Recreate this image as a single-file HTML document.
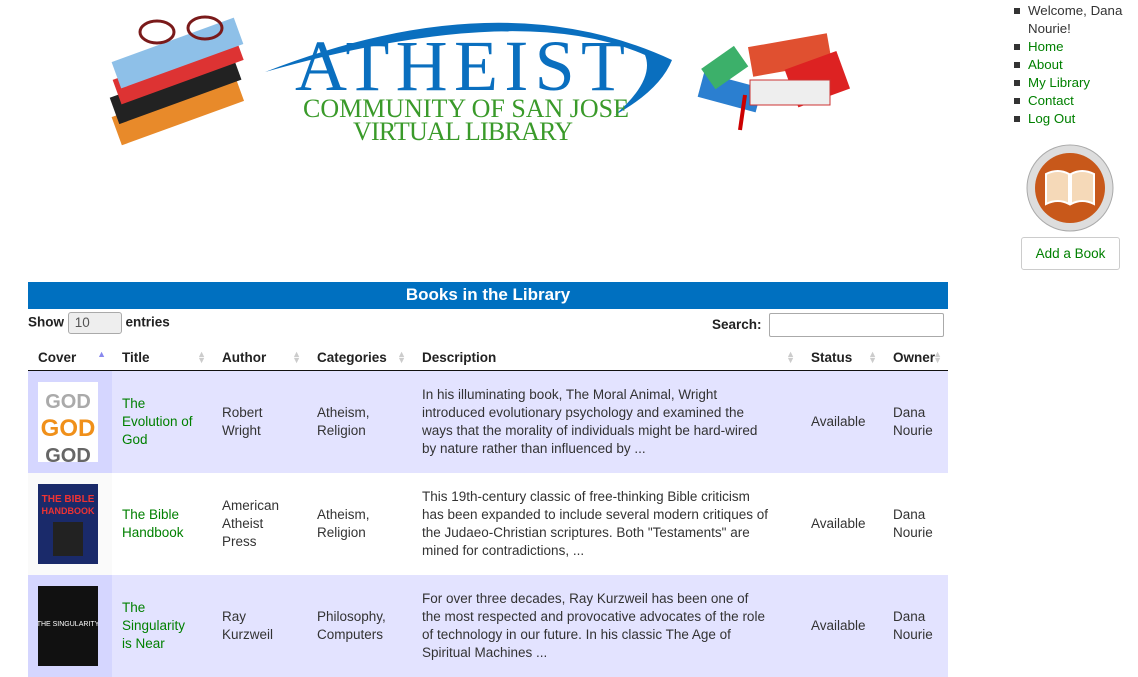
<!DOCTYPE html>
<html><head><meta charset="utf-8"><style>
body,div,td,th,li,span,a{font-family:"Liberation Sans",Arial,Helvetica,sans-serif}
body{margin:0;width:1138px;height:640px;overflow:hidden;background:#fff;font-size:13.5px;color:#333;position:relative}
a{color:#008000;text-decoration:none}
.abs{position:absolute}
.nav{left:1014px;top:2px;margin:0;padding:0;list-style:none;line-height:18px;font-size:13.3px}
.nav li{padding-left:14px;position:relative}
.nav li:before{content:"";position:absolute;left:0;top:6px;width:6px;height:6px;background:#333}
.bar{left:28px;top:282px;width:920px;height:27px;background:#0070c0;color:#fff;font-weight:bold;font-size:17px;text-align:center;line-height:26px}
table{position:absolute;left:28px;top:345px;width:920px;border-collapse:collapse;table-layout:fixed}
th{text-align:left;font-weight:bold;height:25px;padding:0 10px;border-bottom:1px solid #111;position:relative;font-size:13.5px;color:#222}
th .s{position:absolute;right:6px;top:6px;color:#ccc;font-size:9px;line-height:6px}
td{padding:0 10px;height:102px;vertical-align:middle;line-height:18px;white-space:nowrap;overflow:hidden}
tr.o td{background:#e3e3ff}
tr.o td.c{background:#d5d6ff}
td.c{background:#f0f0f0}
tr.e td.c{background:#fafafa}
.cv{width:60px;height:80px;display:block}
</style></head><body>
<svg class="abs" style="left:100px;top:0" width="770" height="150">
<g transform="translate(5,0)">
<rect x="8" y="95" width="130" height="30" fill="#e88a2a" transform="rotate(-20 70 110)"/>
<rect x="6" y="75" width="130" height="28" fill="#222" transform="rotate(-20 70 90)"/>
<rect x="8" y="58" width="130" height="26" fill="#d33" transform="rotate(-20 70 70)"/>
<rect x="8" y="40" width="130" height="28" fill="#8ec0e8" transform="rotate(-20 70 55)"/>
<ellipse cx="52" cy="32" rx="17" ry="11" fill="none" stroke="#7a1a1a" stroke-width="3"/>
<ellipse cx="100" cy="28" rx="17" ry="11" fill="none" stroke="#7a1a1a" stroke-width="3"/>
</g>
<path d="M165 72 Q400 -20 572 60 Q560 90 515 115 Q555 80 545 55 Q420 0 165 72Z" fill="#0a6fbf"/>
<text x="195" y="90" font-family="Liberation Serif,serif" font-size="72" fill="#0a6fbf" textLength="330">ATHEIST</text>
<text x="203" y="117" font-family="Liberation Serif,serif" font-size="26" fill="#3a9a2a" textLength="326">COMMUNITY OF SAN JOSE</text>
<text x="253" y="140" font-family="Liberation Serif,serif" font-size="26" fill="#3a9a2a" textLength="220">VIRTUAL LIBRARY</text>
<g>
<rect x="600" y="80" width="60" height="25" fill="#2b7fd0" transform="rotate(15 630 92)"/>
<rect x="605" y="55" width="40" height="25" fill="#3cb06a" transform="rotate(-35 625 68)"/>
<rect x="650" y="40" width="80" height="30" fill="#e05030" transform="rotate(-10 690 55)"/>
<rect x="690" y="60" width="55" height="40" fill="#d22" transform="rotate(-20 715 80)"/>
<rect x="650" y="80" width="80" height="25" fill="#eee" stroke="#c33"/>
<path d="M645 95 L640 130" stroke="#c00" stroke-width="4"/>
</g>
</svg>
<ul class="abs nav">
<li>Welcome, Dana<br>Nourie!</li>
<li><a>Home</a></li><li><a>About</a></li><li><a>My Library</a></li><li><a>Contact</a></li><li><a>Log Out</a></li>
</ul>
<svg class="abs" style="left:1026px;top:144px" width="88" height="88">
<circle cx="44" cy="44" r="43" fill="#ddd" stroke="#aaa"/>
<circle cx="44" cy="44" r="35" fill="#c8581a"/>
<path d="M20 30 Q32 24 43 30 L43 60 Q32 54 20 60Z M45 30 Q56 24 68 30 L68 60 Q56 54 45 60Z" fill="#f5d9b8" stroke="#fff" stroke-width="2"/>
</svg>
<div class="abs" style="left:1021px;top:237px;width:97px;height:31px;border:1px solid #ccc;border-radius:3px;color:#008000;text-align:center;line-height:31px;font-size:13.5px">Add a Book</div>
<div class="abs bar">Books in the Library</div>
<div class="abs" style="left:28px;top:312px;font-weight:bold;color:#222">Show <span style="display:inline-block;width:52px;height:20px;border:1px solid #aaa;border-radius:3px;background:#eee;font-weight:normal;vertical-align:middle;line-height:20px;text-indent:6px;color:#555">10</span> entries</div>
<div class="abs" style="left:712px;top:317px;font-weight:bold;color:#222">Search:</div>
<div class="abs" style="left:769px;top:313px;width:173px;height:22px;border:1px solid #aaa;border-radius:2px"></div>
<table>
<colgroup><col style="width:84px"><col style="width:100px"><col style="width:95px"><col style="width:105px"><col style="width:389px"><col style="width:82px"><col></colgroup>
<tr><th>Cover<span class="s" style="color:#88e">▲</span></th><th>Title<span class="s">▲<br>▼</span></th><th>Author<span class="s">▲<br>▼</span></th><th>Categories<span class="s">▲<br>▼</span></th><th>Description<span class="s">▲<br>▼</span></th><th>Status<span class="s">▲<br>▼</span></th><th>Owner<span class="s">▲<br>▼</span></th></tr>
<tr class="o"><td class="c"><svg class="cv"><rect width="60" height="80" fill="#fff"/><text x="30" y="26" font-size="20" font-weight="bold" fill="#aaa" text-anchor="middle">GOD</text><text x="30" y="54" font-size="24" font-weight="bold" fill="#f0901a" text-anchor="middle">GOD</text><text x="30" y="80" font-size="20" font-weight="bold" fill="#666" text-anchor="middle">GOD</text></svg></td><td><a>The<br>Evolution of<br>God</a></td><td>Robert<br>Wright</td><td>Atheism,<br>Religion</td><td>In his illuminating book, The Moral Animal, Wright<br>introduced evolutionary psychology and examined the<br>ways that the morality of individuals might be hard-wired<br>by nature rather than influenced by ...</td><td>Available</td><td>Dana<br>Nourie</td></tr>
<tr class="e"><td class="c"><svg class="cv"><rect width="60" height="80" fill="#1a2a6a"/><text x="30" y="18" font-size="10" font-weight="bold" fill="#e33" text-anchor="middle">THE BIBLE</text><text x="30" y="30" font-size="9" font-weight="bold" fill="#e33" text-anchor="middle">HANDBOOK</text><rect x="15" y="38" width="30" height="34" fill="#222"/></svg></td><td><a>The Bible<br>Handbook</a></td><td>American<br>Atheist<br>Press</td><td>Atheism,<br>Religion</td><td>This 19th-century classic of free-thinking Bible criticism<br>has been expanded to include several modern critiques of<br>the Judaeo-Christian scriptures. Both "Testaments" are<br>mined for contradictions, ...</td><td>Available</td><td>Dana<br>Nourie</td></tr>
<tr class="o"><td class="c"><svg class="cv"><rect width="60" height="80" fill="#111"/><text x="30" y="40" font-size="7" fill="#fff" text-anchor="middle">THE SINGULARITY</text></svg></td><td><a>The<br>Singularity<br>is Near</a></td><td>Ray<br>Kurzweil</td><td>Philosophy,<br>Computers</td><td>For over three decades, Ray Kurzweil has been one of<br>the most respected and provocative advocates of the role<br>of technology in our future. In his classic The Age of<br>Spiritual Machines ...</td><td>Available</td><td>Dana<br>Nourie</td></tr>
</table>
</body></html>
